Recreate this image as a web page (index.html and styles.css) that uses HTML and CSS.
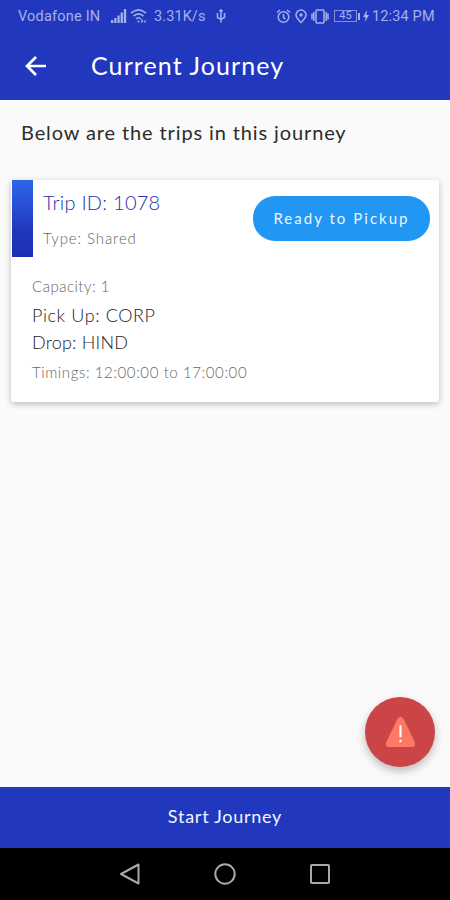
FILE: index.html
```html
<!DOCTYPE html>
<html lang="en">
<head>
<meta charset="utf-8">
<title>Current Journey</title>
<link rel="stylesheet" href="styles.css">
</head>
<body>
<div class="screen">
  <header class="header">
    <div class="status">
      <span class="carrier">Vodafone IN</span>
      <svg class="signal" width="16" height="14" viewBox="0 0 16 14" fill="currentColor"><path d="M0 11h2.300v3H0zM3.200 9h2.300v5H3.200zM6.400 6.500h2.300V14H6.400zM9.600 3.500h2.300V14H9.600zM12.800 0h2.400v14h-2.400z"/></svg>
      <svg class="wifi" width="18" height="14" viewBox="0 0 18 14" fill="none" stroke="currentColor" stroke-width="1.600"><path d="M1 4.200Q8.500-2.500 16 4.200M3.500 7.200Q8.500 2.500 13.500 7.200M6 10Q8.500 7.500 11 10"/><path d="M8.500 11.500v2M12 10.500v3M15 11.500v2"/></svg>
      <span class="speed">3.31K/s</span>
      <svg class="usb" width="10" height="14" viewBox="0 0 10 14" fill="none" stroke="currentColor" stroke-width="1.500"><path d="M5 1v12.500M1.500 4v4.500L5 10.500l3.500-2V4M3.500 2.500L5 .8l1.500 1.700"/></svg>
      <svg class="alarm" width="15" height="15" viewBox="0 0 15 15" fill="none" stroke="currentColor" stroke-width="1.500"><circle cx="7.500" cy="8" r="5.300"/><path d="M1 3.500L4 1M14 3.500L11 1M7.500 5v3.500l2 1.500"/></svg>
      <svg class="pin" width="12" height="15" viewBox="0 0 12 15" fill="none" stroke="currentColor" stroke-width="1.500"><path d="M6 13.500C3 10.500 1 8.300 1 6a5 5 0 0 1 10 0c0 2.300-2 4.500-5 7.500z"/><circle cx="6" cy="6" r="1" fill="currentColor"/></svg>
      <svg class="vibrate" width="18" height="15" viewBox="0 0 18 15" fill="none" stroke="currentColor" stroke-width="1.500"><rect x="5" y="1" width="8" height="13" rx="1"/><path d="M2.800 3v9M15.200 3v9M1 4.500v6M17 4.500v6"/></svg>
      <span class="battery">45</span><span class="cap"></span>
      <svg class="bolt" width="6" height="12" viewBox="0 0 6 12" fill="currentColor"><path d="M4 0L0 7h2.500L2 12l4-7H3.500z"/></svg>
      <span class="clock">12:34 PM</span>
    </div>
    <div class="titlebar">
      <svg class="back" width="22" height="22" viewBox="0 0 22 22" fill="none" stroke="#fff" stroke-width="2.700"><path d="M21 11H3M11 2l-9 9 9 9"/></svg>
      <h1 class="title">Current Journey</h1>
    </div>
  </header>
  <main class="content">
    <h2 class="intro">Below are the trips in this journey</h2>
    <section class="card">
      <div class="card-top">
        <div class="accent"></div>
        <div class="heading">
          <div class="trip">Trip ID: 1078</div>
          <div class="type">Type: Shared</div>
        </div>
        <button class="ready">Ready to Pickup</button>
      </div>
      <div class="details">
        <div class="capacity">Capacity: 1</div>
        <div class="pickup">Pick Up: CORP</div>
        <div class="drop">Drop: HIND</div>
        <div class="timings">Timings: 12:00:00 to 17:00:00</div>
      </div>
    </section>
    <button class="alert" aria-label="Alert"><svg width="31" height="32" viewBox="0 0 32 32"><path d="M12.500 3Q16-2.500 19.500 3L30.500 26Q32.500 31.500 27 31.500H5Q-.5 31.500 1.500 26z" fill="#ff7865"/><path d="M16 9v12.500M16 24v2.500" stroke="#fff" stroke-width="2.200"/></svg></button>
  </main>
  <button class="start">Start Journey</button>
  <nav class="nav">
    <svg width="24" height="24" viewBox="0 0 24 24"><path d="M20.500 2.500v19L3 12z"/></svg>
    <svg width="24" height="24" viewBox="0 0 24 24"><circle cx="12" cy="12" r="9.700"/></svg>
    <svg width="24" height="24" viewBox="0 0 24 24"><rect x="3" y="3" width="18" height="18" rx="1"/></svg>
  </nav>
</div>
</body>
</html>
```
FILE: styles.css
```css
* { box-sizing: border-box; }
body { margin: 0; font-family: Lato, sans-serif; }
button { border: 0; padding: 0; font-family: inherit; }
h1, h2 { margin: 0; font-weight: 400; }
svg { display: block; flex: none; }
.screen { width: 450px; height: 900px; display: flex; flex-direction: column; background: #fafafa; overflow: hidden; white-space: nowrap; }
.header { height: 100px; background: #2138be; flex: none; }
.status { height: 32px; display: flex; align-items: center; padding-left: 18px; color: #a5b0ec; font: 14.5px Roboto, sans-serif; }
.carrier { width: 93px; letter-spacing: 0.2px; }
.wifi { margin-left: 3px; }
.speed { margin-left: 6px; width: 63px; letter-spacing: 0.1px; }
.usb { margin-left: -1px; }
.alarm { margin-left: 50px; }
.pin { margin-left: 4px; }
.vibrate { margin-left: 4px; }
.battery { width: 23px; height: 12px; margin-left: 5px; border: 1px solid #8390df; font-size: 11px; line-height: 10px; text-align: center; }
.cap { width: 2px; height: 7px; margin-left: 1px; background: currentColor; }
.bolt { margin-left: 3px; }
.clock { margin-left: 3px; letter-spacing: 0.15px; }
.titlebar { height: 68px; display: flex; align-items: center; padding-left: 25px; }
.title { margin: -2px 0 0 44px; color: #fff; font-size: 25px; line-height: 30px; letter-spacing: 1.1px; }
.content { flex: 1; position: relative; padding: 20px 11px 0; }
.intro { padding-left: 10px; font-size: 20px; line-height: 24px; color: #2c2c2c; letter-spacing: 0.88px; }
.card { margin-top: 36px; height: 222px; background: #fff; border-radius: 2px; box-shadow: 0 2px 6px rgba(0,0,0,.25); }
.card-top { display: flex; height: 77px; }
.accent { width: 21px; margin-left: 1px; background: linear-gradient(#2d66ea, #2138be 65%, #1a2fb5); }
.heading { width: 220px; padding: 10px 0 0 10px; }
.trip { font-size: 20px; line-height: 25px; color: #2630b0; font-weight: 300; letter-spacing: 0.25px; }
.type { margin-top: 13px; font-size: 15px; line-height: 20px; color: #666; font-weight: 300; letter-spacing: 0.9px; }
.ready { width: 177px; height: 45px; margin-top: 16px; padding-bottom: 2px; border-radius: 22px; background: #2196f3; color: #e9f5ff; font-size: 15px; letter-spacing: 2.03px; }
.details { padding: 20px 0 0 21px; color: #1c1c1c; font-size: 18px; font-weight: 300; line-height: 27px; letter-spacing: 0.6px; }
.capacity, .timings { margin-top: -1px; font-size: 15px; line-height: 20px; color: #666; letter-spacing: 0.6px; }
.capacity { letter-spacing: 0.5px; }
.pickup { margin-top: 6px; }
.drop { letter-spacing: 0.2px; }
.timings { margin-top: 6px; letter-spacing: 0.6px; }
.alert { position: absolute; right: 15px; bottom: 20px; width: 70px; height: 70px; border-radius: 50%; background: #cb4547; box-shadow: 0 4px 8px rgba(0,0,0,.25); display: flex; justify-content: center; align-items: center; }
.start { flex: none; height: 61px; padding-bottom: 3px; background: #2138be; color: #f2f4ff; font-size: 18px; letter-spacing: 0.75px; }
.nav { flex: none; height: 52px; background: #000; display: flex; justify-content: center; align-items: center; gap: 71px; }
.nav svg { fill: none; stroke: #a9a9a9; stroke-width: 2; stroke-linejoin: round; }
```
